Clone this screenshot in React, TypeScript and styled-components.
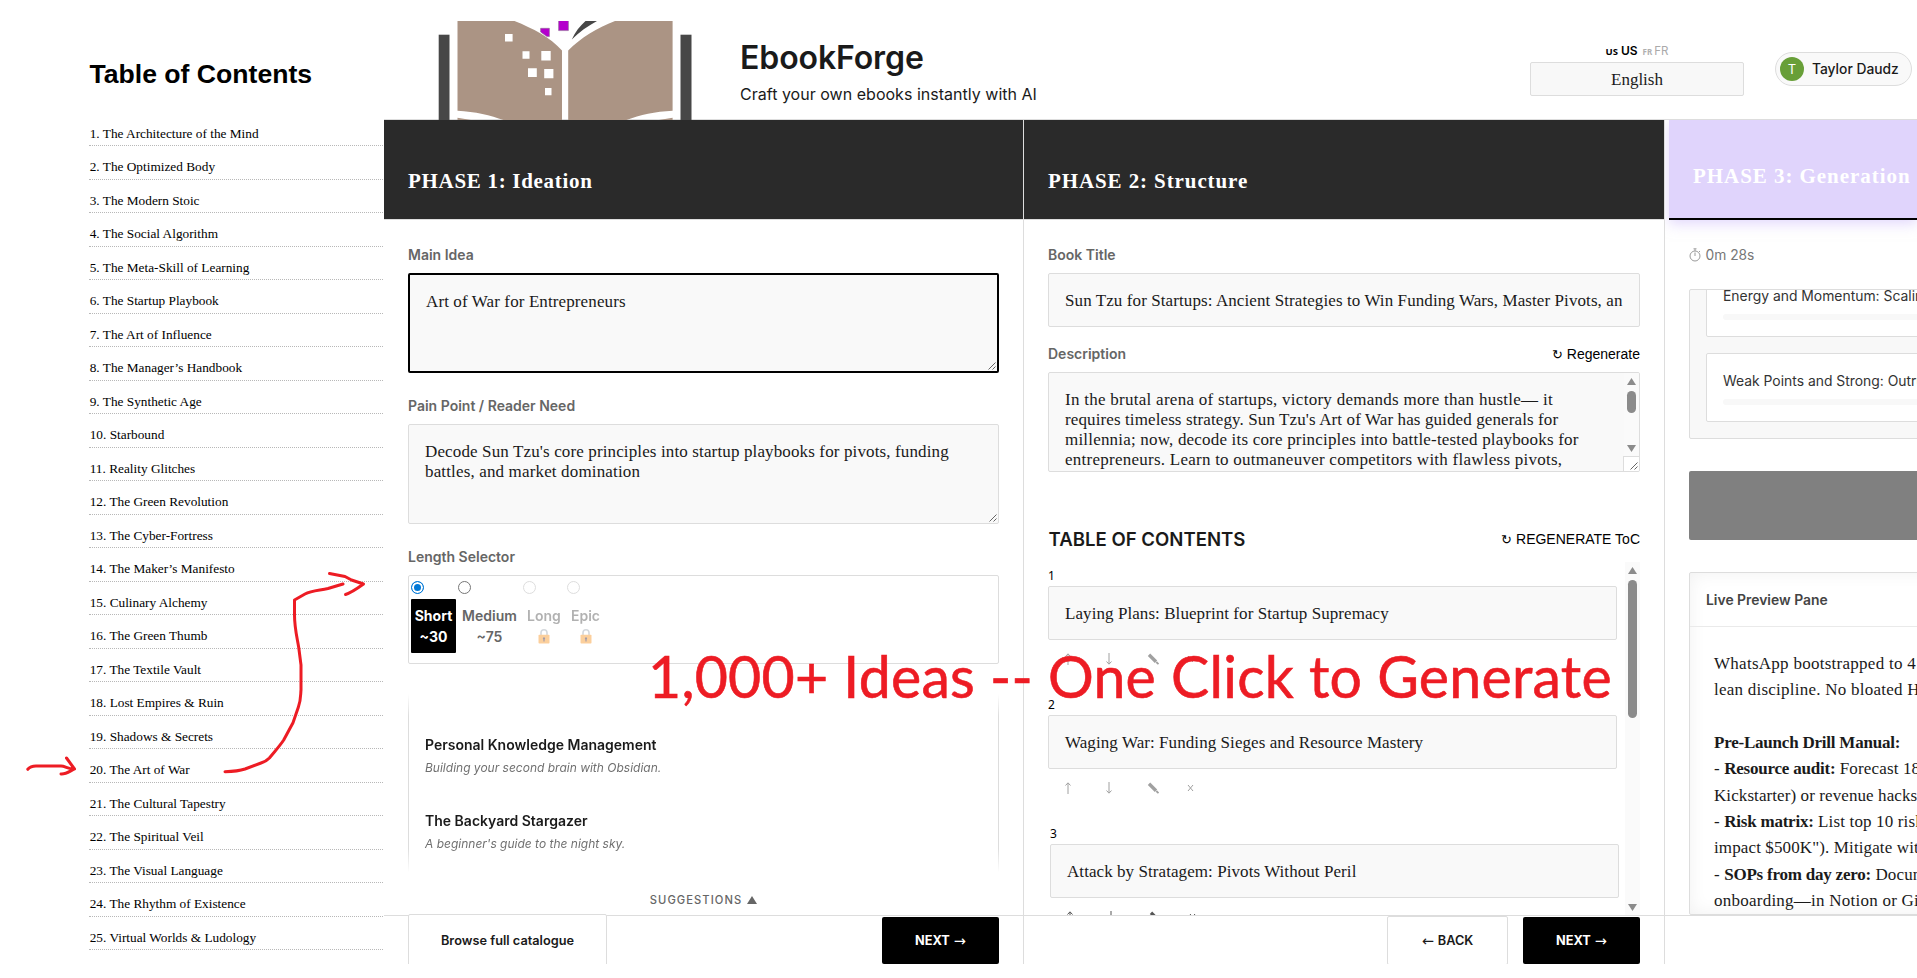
import styled, { createGlobalStyle, css } from "styled-components";

const inter = `Inter, "Liberation Sans", sans-serif`;
const serif = `"Liberation Serif", serif`;
const sans = `"Liberation Sans", sans-serif`;

const catalogue = [
  "The Architecture of the Mind",
  "The Optimized Body",
  "The Modern Stoic",
  "The Social Algorithm",
  "The Meta-Skill of Learning",
  "The Startup Playbook",
  "The Art of Influence",
  "The Manager’s Handbook",
  "The Synthetic Age",
  "Starbound",
  "Reality Glitches",
  "The Green Revolution",
  "The Cyber-Fortress",
  "The Maker’s Manifesto",
  "Culinary Alchemy",
  "The Green Thumb",
  "The Textile Vault",
  "Lost Empires & Ruin",
  "Shadows & Secrets",
  "The Art of War",
  "The Cultural Tapestry",
  "The Spiritual Veil",
  "The Visual Language",
  "The Rhythm of Existence",
  "Virtual Worlds & Ludology",
];

const lengths = [
  { name: "Short", pages: "~30", active: true, locked: false },
  { name: "Medium", pages: "~75", active: false, locked: false },
  { name: "Long", pages: "", active: false, locked: true },
  { name: "Epic", pages: "", active: false, locked: true },
];

const suggestions = [
  {
    title: "Personal Knowledge Management",
    text: "Building your second brain with Obsidian.",
  },
  {
    title: "The Backyard Stargazer",
    text: "A beginner's guide to the night sky.",
  },
];

const description = [
  { text: "In the brutal arena of startups, victory demands more than hustle— it", track: 0.27 },
  { text: "requires timeless strategy. Sun Tzu's Art of War has guided generals for", track: 0.11 },
  { text: "millennia; now, decode its core principles into battle-tested playbooks for", track: 0.19 },
  { text: "entrepreneurs. Learn to outmaneuver competitors with flawless pivots,", track: 0.25 },
];

const chapters = [
  "Laying Plans: Blueprint for Startup Supremacy",
  "Waging War: Funding Sieges and Resource Mastery",
  "Attack by Stratagem: Pivots Without Peril",
];

const progress = ["Energy and Momentum: Scaling", "Weak Points and Strong: Outrun"];

const preview = [
  { text: "WhatsApp bootstrapped to 4", track: 0.27 },
  { text: "lean discipline. No bloated HQ", track: 0.24 },
  { text: "" },
  { bold: "Pre-Launch Drill Manual:", text: "" },
  { lead: "- ", bold: "Resource audit:", text: " Forecast 18", track: 0.15 },
  { text: "Kickstarter) or revenue hacks", track: 0.09 },
  { lead: "- ", bold: "Risk matrix:", text: " List top 10 risk", track: 0.15 },
  { text: 'impact $500K"). Mitigate with', track: 0.12 },
  { lead: "- ", bold: "SOPs from day zero:", text: " Docum", track: 0.15 },
  { text: "onboarding—in Notion or Gi", track: 0.24 },
];

const Logo = () => (
  <LogoSvg viewBox="438 21 254 99">
    <g fill="#474747">
      <rect x="438.7" y="34.7" width="10.8" height="86" />
      <rect x="680.5" y="34.7" width="11" height="86" />
      <path d="M571.8 39.5 C575 32 580 26 585.5 21 H597 C588 26 579 32 571.8 39.5Z" />
    </g>
    <path fill="#b400cc" stroke="#8d6f93" strokeWidth="0.6" d="M558.6 20h9.8v10.6h-9.8z M540.6 28.3h8.8v8.3h-2.5l-6.3-4.6z" />
    <g fill="#ab9484">
      <path d="M457.5 21H514.5C533 28.5 550 37 562 50.5V120H503.5C491 115.5 475 111.5 457.5 110.7Z" />
      <path d="M672.6 21H615C597 28 581 37.5 568.2 50.5V120H626.5C640 115 655 111.5 672.6 110.7Z" />
      <path d="M457.5 117.8L471 120H457.5Z M672.6 117.8L659 120H672.6Z" />
    </g>
    <path
      fill="#fff"
      d="M505 34h7.6v7.5h-7.6z M522.5 51.3h7v7.4h-7z M541.3 51h9.4v9.6h-9.4z M528 68.3h8.8v8.8h-8.8z M544.2 69h9.2v9.3h-9.2z M545 88h6.5v7.3h-6.5z"
    />
  </LogoSvg>
);

const Lock = () => (
  <LockSvg viewBox="0 0 12 15">
    <path d="M3 7V3.8a3 3 0 0 1 6 0V7" fill="none" stroke="#a9b1ba" strokeWidth="1.6" />
    <rect x="0.5" y="5.8" width="11" height="8.8" rx="0.8" fill="#f9a03c" />
    <path d="M6 8.3a1.2 1.2 0 0 1 .6 2.2V12.5h-1.2V10.5A1.2 1.2 0 0 1 6 8.3z" fill="#4a3b52" />
  </LockSvg>
);

const Timer = () => (
  <svg width="12" height="14" viewBox="0 0 12 14" fill="none" stroke="#9a9a9a">
    <circle cx="6" cy="8" r="5" />
    <path d="M4.5 0.8h3M6 1v2M6 4.5V8M10 3l1 1" />
  </svg>
);

const Grip = () => (
  <GripSvg viewBox="0 0 8 8">
    <path d="M0.5 7.5L7.5 0.5M4.5 7.5L7.5 4.5" stroke="#555" strokeWidth="0.9" />
  </GripSvg>
);

const Tools = ({ dark = false }: { dark?: boolean }) => (
  <ToolRow dark={dark}>
    <svg width="6" height="12" viewBox="0 0 6 12">
      <path d="M3 12V1M0.5 3.5L3 0.8L5.5 3.5" />
    </svg>
    <svg width="6" height="12" viewBox="0 0 6 12">
      <path d="M3 0V11M0.5 8.5L3 11.2L5.5 8.5" />
    </svg>
    <svg width="12" height="12" viewBox="0 0 12 12">
      <path d="M2 1.8L9 8.8" strokeWidth="3.4" />
      <path d="M9.3 9L11.5 11.2" strokeWidth="1.8" />
    </svg>
    <svg width="7" height="8" viewBox="0 0 7 8">
      <path d="M1 1L6 7M6 1L1 7" />
    </svg>
  </ToolRow>
);

const App: React.FC = () => {
  return (
    <Page>
      <GlobalStyle />
      <Sidebar>
        <SidebarTitle>Table of Contents</SidebarTitle>
        {catalogue.map((title, index) => (
          <SidebarRow key={title}>
            {index + 1}. {title}
          </SidebarRow>
        ))}
      </Sidebar>

      <Main>
        <Header>
          <Logo />
          <Brand>
            <BrandName>EbookForge</BrandName>
            <Tagline>Craft your own ebooks instantly with AI</Tagline>
          </Brand>
          <Language>
            <Flags>
              <Flag active>US</Flag>
              <Region active>US</Region>
              <Flag>FR</Flag>
              <Region>FR</Region>
            </Flags>
            <LanguageBox>English</LanguageBox>
          </Language>
          <User>
            <Avatar>T</Avatar>
            Taylor Daudz
          </User>
        </Header>

        <Columns>
          <Column>
            <PhaseHead track={0.7}>PHASE 1: Ideation</PhaseHead>
            <Body>
              <Label>Main Idea</Label>
              <TextArea focused>
                <Line track={0.11}>Art of War for Entrepreneurs</Line>
                <Grip />
              </TextArea>
              <LabelRow space={24}>
                <Label>Pain Point / Reader Need</Label>
              </LabelRow>
              <TextArea>
                <Line track={0.13}>
                  Decode Sun Tzu's core principles into startup playbooks for pivots, funding
                </Line>
                <Line track={0.15}>battles, and market domination</Line>
                <Grip />
              </TextArea>
              <LabelRow space={24}>
                <Label>Length Selector</Label>
              </LabelRow>
              <LengthBox>
                {lengths.map(({ name, pages, active, locked }) => (
                  <LengthOption key={name} locked={locked}>
                    <Radio active={active} locked={locked} />
                    <LengthLabel active={active}>
                      <span>{name}</span>
                      {locked ? <Lock /> : <span>{pages}</span>}
                    </LengthLabel>
                  </LengthOption>
                ))}
              </LengthBox>
              <SuggestionList>
                {suggestions.map(({ title, text }) => (
                  <Suggestion key={title}>
                    <SuggestionTitle>{title}</SuggestionTitle>
                    <SuggestionText>{text}</SuggestionText>
                  </Suggestion>
                ))}
              </SuggestionList>
              <SuggestionToggle>
                SUGGESTIONS
                <svg width="10" height="8" viewBox="0 0 10 8">
                  <path d="M5 0L10 8H0z" fill="#666" />
                </svg>
              </SuggestionToggle>
            </Body>
            <Footer>
              <BrowseButton>Browse full catalogue</BrowseButton>
              <NextButton>
                NEXT <Arrow>→</Arrow>
              </NextButton>
            </Footer>
          </Column>

          <Column>
            <PhaseHead track={0.9}>PHASE 2: Structure</PhaseHead>
            <Body>
              <Label>Book Title</Label>
              <Input>
                <Line track={0.09}>
                  Sun Tzu for Startups: Ancient Strategies to Win Funding Wars, Master Pivots, an
                </Line>
              </Input>
              <LabelRow space={18}>
                <Label>Description</Label>
                <Regenerate>
                  <Cycle>↻</Cycle> Regenerate
                </Regenerate>
              </LabelRow>
              <TextArea>
                {description.map(({ text, track }) => (
                  <Line key={text} track={track}>
                    {text}
                  </Line>
                ))}
                <AreaScroll>
                  <ScrollArrow />
                  <Thumb size={22} />
                  <ScrollArrow down />
                </AreaScroll>
                <Corner>
                  <Grip />
                </Corner>
              </TextArea>
              <TocHead>
                <TocTitle>TABLE OF CONTENTS</TocTitle>
                <Regenerate>
                  <Cycle>↻</Cycle> REGENERATE ToC
                </Regenerate>
              </TocHead>
              <TocScroller>
                <Chapters>
                  {chapters.map((title, index) => (
                    <Chapter key={title} hovered={index === 2}>
                      <ChapterNumber>{index + 1}</ChapterNumber>
                      <ChapterInput>
                        <Line track={0.07}>{title}</Line>
                      </ChapterInput>
                      <Tools dark={index === 2} />
                    </Chapter>
                  ))}
                </Chapters>
                <TocScroll>
                  <ScrollArrow />
                  <Thumb size={138} />
                  <ScrollArrow down />
                </TocScroll>
              </TocScroller>
            </Body>
            <Footer>
              <BackButton>
                <Arrow>←</Arrow> BACK
              </BackButton>
              <NextButton>
                NEXT <Arrow>→</Arrow>
              </NextButton>
            </Footer>
          </Column>

          <Column last>
            <PhaseHead upcoming track={0.95}>
              PHASE 3: Generation
            </PhaseHead>
            <Body>
              <Elapsed>
                <Timer />
                0m 28s
              </Elapsed>
              <ProgressBox>
                <ProgressList>
                  {progress.map((title) => (
                    <ProgressCard key={title}>
                      <ProgressTitle>{title}</ProgressTitle>
                      <ProgressBar />
                    </ProgressCard>
                  ))}
                </ProgressList>
              </ProgressBox>
              <GenerateButton />
              <Preview>
                <PreviewHead>Live Preview Pane</PreviewHead>
                <PreviewText>
                  {preview.map(({ lead, bold, text, track }, index) => (
                    <PreviewLine key={index} track={track}>
                      {lead}
                      {bold ? <b>{bold}</b> : null}
                      {text}
                    </PreviewLine>
                  ))}
                </PreviewText>
              </Preview>
            </Body>
            <Footer />
          </Column>
        </Columns>
      </Main>

      <Slogan>1,000+ Ideas -- One Click to Generate</Slogan>
      <Scribble viewBox="0 0 384 978">
        <path d="M225 771.7C232 771.5 239 771 245 769L261 763C264 762 267 760.5 269.4 758C275 751 279 747 283.7 740L293 722.7L298.4 707C301 700 300.5 695 301 690V665L298.8 648C297 637 294.5 628 294.5 615V600L305 594C311 590.5 318 590.5 328 588.5L343 584" />
        <path d="M329.5 573.5L345 576.5L351.5 580L363.5 584C358 588 352 592.5 345.5 594.5" />
        <path d="M27.8 769.3C30 766.5 32 766 36 766L61 766C65 766 69 769.5 74.5 769L66.5 758M74.5 769C70 771 66 774.5 61 774" />
      </Scribble>
    </Page>
  );
};

export default App;

type TrackProps = {
  track?: number;
};

const GlobalStyle = createGlobalStyle`
  * {
    box-sizing: border-box;
  }
  body {
    margin: 0;
    background: #fff;
    color: #1a1a1a;
    font-family: ${inter};
  }
`;

const Page = styled.div`
  position: relative;
  display: flex;
  width: 100%;
  height: 978px;
  overflow: hidden;
`;

const Sidebar = styled.aside`
  width: 383px;
  flex: none;
  margin-right: 1px;
  padding: 58px 0 0 89px;
  color: #000;
`;

const SidebarTitle = styled.h1`
  margin: 0 0 22.5px;
  padding-left: 0.5px;
  font: bold 26.6px/32px ${sans};
`;

const SidebarRow = styled.div`
  height: 33.5px;
  padding: 13.4px 0 0 0.7px;
  border-bottom: 1px dotted #b8b8b8;
  font: 13.3px/16px ${serif};
`;

const Main = styled.main`
  flex: 1;
  min-width: 0;
  height: 964px;
  display: flex;
  flex-direction: column;
`;

const Header = styled.header`
  display: flex;
  align-items: flex-start;
  height: 120px;
  flex: none;
  padding: 0 5px 0 54px;
  border-bottom: 1px solid #ddd;
`;

const LogoSvg = styled.svg`
  width: 254px;
  height: 99px;
  margin-top: 21px;
`;

const Brand = styled.div`
  margin: 38px 0 0 48px;
`;

const BrandName = styled.h1`
  margin: 0;
  font-size: 32px;
  font-weight: 600;
  line-height: 40px;
  letter-spacing: -0.1px;
`;

const Tagline = styled.p`
  margin: 6px 0 0;
  font-size: 16px;
  line-height: 20px;
  letter-spacing: 0.02px;
`;

const Language = styled.div`
  width: 214px;
  margin: 43px 0 0 auto;
`;

const Flags = styled.div`
  display: flex;
  justify-content: center;
  align-items: baseline;
  height: 19px;
  line-height: 16px;
`;

type ActiveProps = {
  active?: boolean;
};

const Flag = styled.span<ActiveProps>`
  margin-right: ${({ active }) => (active ? 3 : 2)}px;
  color: ${({ active }) => (active ? "#000" : "#b0b0b0")};
  font: bold ${({ active }) => (active ? 9.5 : 8)}px/16px "Noto Sans", sans-serif;
`;

const Region = styled.span<ActiveProps>`
  margin-right: ${({ active }) => (active ? 5 : 0)}px;
  color: ${({ active }) => (active ? "#000" : "#aaa")};
  font-size: ${({ active }) => (active ? 12 : 11.5)}px;
  font-weight: ${({ active }) => (active ? 600 : 400)};
`;

const LanguageBox = styled.div`
  height: 34px;
  border: 1px solid #ddd;
  border-radius: 2px;
  background: #f8f8f8;
  font: 17px/33px ${serif};
  text-align: center;
`;

const User = styled.div`
  display: flex;
  align-items: center;
  gap: 8px;
  width: 137px;
  height: 34px;
  margin: 52px 0 0 31px;
  padding-left: 4px;
  border: 1px solid #ddd;
  border-radius: 17px;
  background: #f9f9f9;
  font-size: 13.8px;
  font-weight: 500;
  white-space: nowrap;
`;

const Avatar = styled.div`
  width: 24px;
  height: 24px;
  border-radius: 50%;
  background: #689f38;
  color: #fff;
  font-size: 13px;
  font-weight: 400;
  line-height: 24px;
  text-align: center;
`;

const Columns = styled.div`
  flex: 1;
  min-height: 0;
  display: grid;
  grid-template-columns: 640px 641px 1fr;
`;

const Column = styled.section<{ last?: boolean }>`
  display: flex;
  flex-direction: column;
  min-width: 0;
  min-height: 0;
  overflow: hidden;
  border-right: ${({ last }) => (last ? "none" : "1px solid #ddd")};
`;

const PhaseHead = styled.h2<TrackProps & { upcoming?: boolean }>`
  height: 100px;
  flex: none;
  margin: 0;
  padding: 49px 0 0 24px;
  border-bottom: 1px solid #ddd;
  background: #2a2a2a;
  color: #fff;
  font: bold 21px/24px ${serif};
  letter-spacing: ${({ track }) => track}px;
  white-space: nowrap;
  ${({ upcoming }) =>
    upcoming &&
    css`
      margin-left: 4px;
      padding-top: 44px;
      border-bottom: 2px solid #000;
      background: #e0d4fc;
      box-shadow: 0 4px 12px rgba(200, 180, 250, 0.5);
    `}
`;

const Body = styled.div`
  flex: 1;
  min-height: 0;
  padding: 26px 24px 0;
`;

const Label = styled.div`
  color: #666;
  font-size: 14px;
  font-weight: 600;
  line-height: 18px;
`;

const LabelRow = styled.div<{ space: number }>`
  display: flex;
  justify-content: space-between;
  height: 18px;
  margin-top: ${({ space }) => space}px;
`;

const fieldBox = css`
  margin-top: 9px;
  border: 1px solid #ddd;
  border-radius: 2px;
  background: #f9f9f9;
`;

const TextArea = styled.div<{ focused?: boolean }>`
  ${fieldBox}
  position: relative;
  height: 100px;
  padding: 16.5px 16px 0;
  overflow: hidden;
  ${({ focused }) => focused && "border: 2px solid #000;"}
`;

const Line = styled.div<TrackProps>`
  font: 17px/20px ${serif};
  letter-spacing: ${({ track = 0 }) => track}px;
  white-space: nowrap;
`;

const GripSvg = styled.svg`
  position: absolute;
  right: 1px;
  bottom: 1px;
  width: 8px;
  height: 8px;
`;

const Input = styled.div`
  ${fieldBox}
  display: flex;
  align-items: center;
  height: 54px;
  padding: 2px 16px 0;
  overflow: hidden;
`;

const LengthBox = styled.div`
  display: grid;
  grid-template-columns: 45px 63px 42px 37px;
  column-gap: 2px;
  height: 89px;
  margin-top: 9px;
  padding: 5px 2px;
  border: 1px solid #ddd;
  border-radius: 2px;
`;

type LockedProps = {
  locked: boolean;
};

const LengthOption = styled.div<LockedProps>`
  opacity: ${({ locked }) => (locked ? 0.5 : 1)};
`;

const Radio = styled.div<ActiveProps & LockedProps>`
  width: 13px;
  height: 13px;
  border: 1px solid ${({ active, locked }) => (active ? "#0078d7" : locked ? "#bbb" : "#767676")};
  border-radius: 50%;
  background: ${({ active }) => (active ? "#0078d7" : "#fff")};
  box-shadow: inset 0 0 0 2px #fff;
`;

const LengthLabel = styled.div<ActiveProps>`
  display: flex;
  flex-direction: column;
  align-items: center;
  height: 54px;
  margin-top: 5px;
  padding-top: 6px;
  border-radius: 1px;
  background: ${({ active }) => (active ? "#000" : "none")};
  color: ${({ active }) => (active ? "#fff" : "#666")};
  font-size: 14px;
  font-weight: ${({ active }) => (active ? 700 : 600)};
  line-height: 21px;
`;

const LockSvg = styled.svg`
  width: 12px;
  height: 15px;
  margin-top: 3px;
`;

const SuggestionList = styled.div`
  display: flex;
  flex-direction: column;
  gap: 34px;
  height: 184px;
  margin-top: 30px;
  padding: 41px 16px 0;
  border: solid #ddd;
  border-width: 0 1px;
  mask-image: linear-gradient(transparent, #000 12%, #000 84%, transparent 97%);
`;

const Suggestion = styled.div`
  display: flex;
  flex-direction: column;
  gap: 4px;
`;

const SuggestionTitle = styled.div`
  font-size: 14px;
  font-weight: 600;
  line-height: 20px;
`;

const SuggestionText = styled.div`
  color: #707070;
  font-size: 12px;
  font-style: italic;
  line-height: 18px;
`;

const SuggestionToggle = styled.div`
  display: flex;
  justify-content: center;
  align-items: center;
  gap: 5px;
  margin-top: 13.5px;
  color: #666;
  font-size: 11.2px;
  font-weight: 500;
  letter-spacing: 1.05px;
  line-height: 16px;
`;

const Footer = styled.footer`
  display: flex;
  height: 49px;
  flex: none;
  padding: 1px 24px 0;
  border-top: 1px solid #ddd;
`;

const footerButton = css`
  display: flex;
  justify-content: center;
  align-items: center;
  gap: 4px;
  flex: none;
  padding: 0;
  border: 1px solid #ddd;
  border-radius: 2px;
  background: #fff;
  color: #1a1a1a;
  font: 600 12.75px ${inter};
`;

const BrowseButton = styled.button`
  ${footerButton}
  position: relative;
  width: 199px;
  height: 53px;
  margin-top: -3px;
`;

const BackButton = styled.button`
  ${footerButton}
  width: 121px;
  height: 49px;
  margin: -1px 15px 0 auto;
`;

const NextButton = styled.button`
  ${footerButton}
  width: 117px;
  height: 47px;
  margin-left: auto;
  border: none;
  background: #000;
  color: #fff;
  font-weight: 700;
  ${BackButton} + & {
    margin-left: 0;
  }
`;

const Arrow = styled.span`
  font: 14.5px/14px "DejaVu Sans", sans-serif;
`;

const Regenerate = styled.div`
  height: 18px;
  color: #000;
  font: 14px/18px ${sans};
`;

const Cycle = styled.span`
  font-size: 13px;
  line-height: 1;
`;

const scrollTrack = css`
  display: flex;
  flex-direction: column;
  align-items: center;
  width: 15px;
  padding: 5px 0 4px;
  background: #fafafa;
`;

const AreaScroll = styled.div`
  ${scrollTrack}
  position: absolute;
  top: 0;
  right: 0;
  bottom: 15px;
`;

const TocScroll = styled.div`
  ${scrollTrack}
`;

const ScrollArrow = styled.div<{ down?: boolean }>`
  width: 9px;
  height: 7px;
  background: #8b8b8b;
  clip-path: polygon(50% 0, 100% 100%, 0 100%);
  ${({ down }) => down && "margin-top: auto; transform: rotate(180deg);"}
`;

const Thumb = styled.div<{ size: number }>`
  width: 9px;
  height: ${({ size }) => size}px;
  margin-top: 6px;
  border-radius: 5px;
  background: #8b8b8b;
`;

const Corner = styled.div`
  position: absolute;
  right: 0;
  bottom: 0;
  width: 16px;
  height: 15px;
  border: solid #ddd;
  border-width: 1px 0 0 1px;
  background: #fff;
`;

const TocHead = styled.div`
  display: flex;
  justify-content: space-between;
  align-items: center;
  height: 24px;
  margin-top: 55px;
`;

const TocTitle = styled.h3`
  margin: 0;
  padding-left: 0.5px;
  font-size: 18.6px;
  font-weight: 600;
  line-height: 24px;
`;

const TocScroller = styled.div`
  display: flex;
  justify-content: space-between;
  height: 353px;
  margin-top: 11px;
  overflow: hidden;
`;

const Chapters = styled.div`
  padding-top: 5px;
`;

const Chapter = styled.div<{ hovered: boolean }>`
  width: 569px;
  height: 129px;
  margin-left: ${({ hovered }) => (hovered ? 2 : 0)}px;
`;

const ChapterNumber = styled.div`
  height: 19px;
  color: #000;
  font: 12px/18px "Noto Sans", sans-serif;
`;

const ChapterInput = styled(Input)`
  margin: 0;
`;

type ToolProps = {
  dark: boolean;
};

const ToolRow = styled.div<ToolProps>`
  display: flex;
  align-items: center;
  height: 12px;
  margin-top: 13px;
  padding-left: 17px;
  fill: none;
  stroke: ${({ dark }) => (dark ? "#555" : "#a0a0a0")};

  svg + svg {
    margin-left: 35px;
  }
  svg:last-child {
    margin-left: 28px;
  }
`;

const Elapsed = styled.div`
  display: flex;
  align-items: center;
  gap: 4.5px;
  color: #777;
  font-size: 13.8px;
  line-height: 18px;
`;

const ProgressBox = styled.div`
  width: 400px;
  height: 150px;
  margin-top: 25px;
  padding: 0 16px;
  border: 1px solid #ddd;
  border-radius: 2px;
  background: #f8f8f8;
  overflow: hidden;
`;

const ProgressList = styled.div`
  display: flex;
  flex-direction: column;
  gap: 16px;
  margin-top: -22px;
`;

const ProgressCard = styled.div`
  height: 69px;
  padding: 18px 16px 0;
  border: 1px solid #ddd;
  border-radius: 2px;
  background: #fff;
`;

const ProgressTitle = styled.div`
  color: #333;
  font-size: 13.9px;
  line-height: 18px;
  white-space: nowrap;
`;

const ProgressBar = styled.div`
  height: 6px;
  margin-top: 9px;
  border-radius: 3px;
  background: #f8f8f8;
`;

const GenerateButton = styled.div`
  width: 400px;
  height: 69px;
  margin-top: 32px;
  border-radius: 2px;
  background: #808080;
`;

const Preview = styled.div`
  width: 400px;
  height: 343px;
  margin-top: 32px;
  border: 1px solid #ddd;
  border-radius: 2px;
  box-shadow: inset 0 0 18px rgba(0, 0, 0, 0.06);
  overflow: hidden;
`;

const PreviewHead = styled.div`
  height: 54px;
  padding-left: 16px;
  border-bottom: 1px solid #eaeaea;
  color: #444;
  font-size: 13.9px;
  font-weight: 600;
  line-height: 54px;
`;

const PreviewText = styled.div`
  padding: 24px 0 0 24px;
`;

const PreviewLine = styled.div<TrackProps>`
  height: 26.35px;
  font: 17px/26px ${serif};
  letter-spacing: ${({ track = 0 }) => track}px;
  white-space: pre;

  b {
    letter-spacing: -0.22px;
  }
`;

const Slogan = styled.div`
  position: absolute;
  top: 641px;
  left: 648px;
  color: #ed1c24;
  font: 57.2px/70px Lato, sans-serif;
  letter-spacing: 0.26px;
  white-space: nowrap;
  -webkit-text-stroke: 0.6px #ed1c24;
`;

const Scribble = styled.svg`
  position: absolute;
  top: 0;
  left: 0;
  width: 384px;
  height: 978px;
  fill: none;
  stroke: #ed1c24;
  stroke-width: 3;
  stroke-linecap: round;
  stroke-linejoin: round;
`;
